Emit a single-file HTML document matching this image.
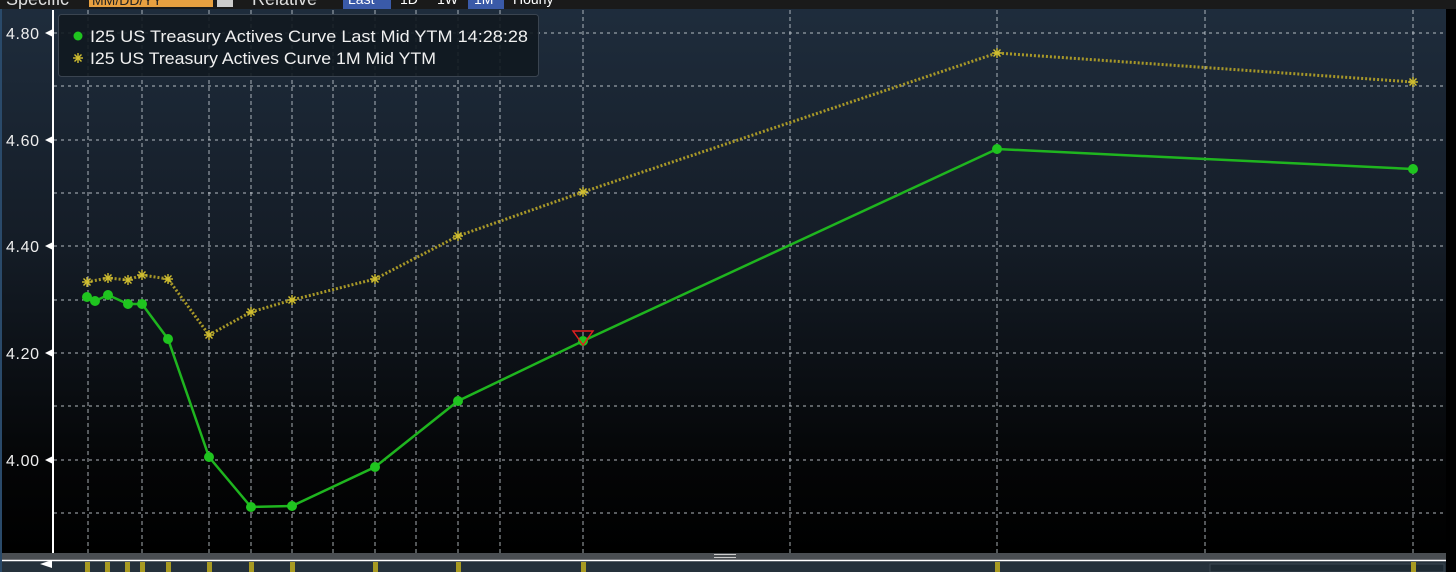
<!DOCTYPE html>
<html><head><meta charset="utf-8"><style>
html,body{margin:0;padding:0;width:1456px;height:572px;overflow:hidden;background:#000;}
svg{display:block}
text{font-family:"Liberation Sans",sans-serif;}
</style></head><body>
<svg width="1456" height="572" viewBox="0 0 1456 572" xmlns="http://www.w3.org/2000/svg">
<defs>
<linearGradient id="bg" x1="0" y1="0" x2="0" y2="1">
<stop offset="0" stop-color="#1f2d3d"/>
<stop offset="0.45" stop-color="#141c26"/>
<stop offset="0.85" stop-color="#040506"/>
<stop offset="1" stop-color="#000"/>
</linearGradient>
<g id="st" stroke="#d0be30" stroke-width="1.4">
<line x1="-5" y1="0" x2="5" y2="0"/><line x1="0" y1="-5" x2="0" y2="5"/>
<line x1="-3.5" y1="-3.5" x2="3.5" y2="3.5"/><line x1="-3.5" y1="3.5" x2="3.5" y2="-3.5"/>
</g>
</defs>
<rect x="0" y="0" width="1446" height="553" fill="url(#bg)"/>
<rect x="1446" y="0" width="10" height="572" fill="#000"/>
<rect x="0" y="0" width="2" height="572" fill="#2a4a6a"/>
<!-- header -->
<rect x="0" y="0" width="1456" height="9" fill="#1a1a1a"/>
<text x="6" y="5" fill="#ddd" font-size="18">Specific</text>
<rect x="89" y="0" width="124" height="7" fill="#e8a040"/>
<text x="92" y="5" fill="#222" font-size="14">MM/DD/YY</text>
<rect x="217" y="0" width="16" height="7" fill="#ccc"/>
<text x="252" y="5" fill="#ddd" font-size="18">Relative</text>
<rect x="343" y="0" width="48" height="9" fill="#3a5aa8"/>
<text x="348" y="4" fill="#fff" font-size="14">Last</text>
<text x="400" y="4" fill="#fff" font-size="14">1D</text>
<text x="437" y="4" fill="#fff" font-size="14">1W</text>
<rect x="468" y="0" width="36" height="9" fill="#3a5aa8"/>
<text x="474" y="4" fill="#fff" font-size="14">1M</text>
<text x="513" y="4" fill="#fff" font-size="14">Hourly</text>
<!-- grid -->
<g stroke="#cfd6dc" stroke-width="1" stroke-dasharray="3,4" opacity="0.85">
<line x1="54" y1="33" x2="1446" y2="33"/><line x1="54" y1="86" x2="1446" y2="86"/>
<line x1="54" y1="140" x2="1446" y2="140"/><line x1="54" y1="193" x2="1446" y2="193"/>
<line x1="54" y1="246" x2="1446" y2="246"/><line x1="54" y1="300" x2="1446" y2="300"/>
<line x1="54" y1="353" x2="1446" y2="353"/><line x1="54" y1="406" x2="1446" y2="406"/>
<line x1="54" y1="460" x2="1446" y2="460"/><line x1="54" y1="513" x2="1446" y2="513"/>
</g>
<g stroke="#cfd6dc" stroke-width="1" stroke-dasharray="4,3" opacity="0.8">
<line x1="88" y1="10" x2="88" y2="553"/><line x1="142" y1="10" x2="142" y2="553"/>
<line x1="209" y1="10" x2="209" y2="553"/><line x1="251" y1="10" x2="251" y2="553"/>
<line x1="292" y1="10" x2="292" y2="553"/><line x1="333" y1="10" x2="333" y2="553"/>
<line x1="375" y1="10" x2="375" y2="553"/><line x1="416" y1="10" x2="416" y2="553"/>
<line x1="458" y1="10" x2="458" y2="553"/><line x1="500" y1="10" x2="500" y2="553"/>
<line x1="583" y1="10" x2="583" y2="553"/><line x1="790" y1="10" x2="790" y2="553"/>
<line x1="997" y1="10" x2="997" y2="553"/><line x1="1205" y1="10" x2="1205" y2="553"/>
<line x1="1413" y1="10" x2="1413" y2="553"/>
</g>
<!-- axis -->
<line x1="53" y1="10" x2="53" y2="572" stroke="#fff" stroke-width="2"/>
<g fill="#eee" font-size="16">
<text x="6" y="39" textLength="33">4.80</text><text x="6" y="146" textLength="33">4.60</text><text x="6" y="252" textLength="33">4.40</text>
<text x="6" y="359" textLength="33">4.20</text><text x="6" y="466" textLength="33">4.00</text>
</g>
<g fill="#fff">
<polygon points="45,33 53,29 53,37"/><polygon points="45,140 53,136 53,144"/>
<polygon points="45,246 53,242 53,250"/><polygon points="45,353 53,349 53,357"/>
<polygon points="45,460 53,456 53,464"/>
</g>
<!-- yellow dotted -->
<polyline fill="none" stroke="#a89828" stroke-width="3" stroke-dasharray="2,2"
points="87,282 108,278 128,280 142,275 168,279 209,335 251,312 292,300 375,279 458,236 583,192 997,53 1413,82"/>
<use href="#st" x="87" y="282"/><use href="#st" x="108" y="278"/><use href="#st" x="128" y="280"/><use href="#st" x="142" y="275"/><use href="#st" x="168" y="279"/><use href="#st" x="209" y="335"/><use href="#st" x="251" y="312"/><use href="#st" x="292" y="300"/><use href="#st" x="375" y="279"/><use href="#st" x="458" y="236"/><use href="#st" x="583" y="192"/><use href="#st" x="997" y="53"/><use href="#st" x="1413" y="82"/>
<!-- green -->
<polyline fill="none" stroke="#1fb51f" stroke-width="2.5"
points="87,297 95,301 108,295 128,304 142,304 168,339 209,457 251,507 292,506 375,467 458,401 583,341 997,149 1413,169"/>
<g fill="#1fc41f">
<circle cx="87" cy="297" r="5"/><circle cx="95" cy="301" r="5"/><circle cx="108" cy="295" r="5"/><circle cx="128" cy="304" r="5"/><circle cx="142" cy="304" r="5"/><circle cx="168" cy="339" r="5"/><circle cx="209" cy="457" r="5"/><circle cx="251" cy="507" r="5"/><circle cx="292" cy="506" r="5"/><circle cx="375" cy="467" r="5"/><circle cx="458" cy="401" r="5"/><circle cx="583" cy="341" r="5"/><circle cx="997" cy="149" r="5"/><circle cx="1413" cy="169" r="5"/>
</g>
<polygon points="573,331 593,331 583,345" fill="none" stroke="#e02020" stroke-width="1.5"/>
<!-- legend -->
<rect x="58.5" y="14.5" width="480" height="62" rx="3" fill="#111820" fill-opacity="0.9" stroke="#3a4450"/>
<circle cx="78" cy="36" r="4.5" fill="#1fc41f"/>
<use href="#st" x="78" y="58"/>
<g fill="#f0f0f0" font-size="17">
<text x="90" y="42" textLength="438" lengthAdjust="spacingAndGlyphs">I25 US Treasury Actives Curve Last Mid YTM 14:28:28</text>
<text x="90" y="64" textLength="346" lengthAdjust="spacingAndGlyphs">I25 US Treasury Actives Curve 1M Mid YTM</text>
</g>
<!-- bottom bar -->
<rect x="2" y="553" width="1444" height="7" fill="#4a4e52"/>
<rect x="714" y="554" width="22" height="1" fill="#ccc"/><rect x="714" y="557" width="22" height="1" fill="#ccc"/>
<rect x="2" y="561" width="1444" height="11" fill="#25313b"/>
<line x1="2" y1="560.5" x2="1446" y2="560.5" stroke="#fff" stroke-width="1.5"/>
<polygon points="40,564 52,560 52,568" fill="#fff"/>
<rect x="1210" y="564" width="234" height="8" fill="#1e2a33" stroke="#3a4650"/>
<g fill="#a89a22">
<rect x="85" y="562" width="5" height="10"/><rect x="105" y="562" width="5" height="10"/><rect x="125" y="562" width="5" height="10"/><rect x="140" y="562" width="5" height="10"/><rect x="166" y="562" width="5" height="10"/><rect x="207" y="562" width="5" height="10"/><rect x="249" y="562" width="5" height="10"/><rect x="290" y="562" width="5" height="10"/><rect x="373" y="562" width="5" height="10"/><rect x="456" y="562" width="5" height="10"/><rect x="581" y="562" width="5" height="10"/><rect x="995" y="562" width="5" height="10"/><rect x="1411" y="562" width="5" height="10"/>
</g>
</svg>
</body></html>
